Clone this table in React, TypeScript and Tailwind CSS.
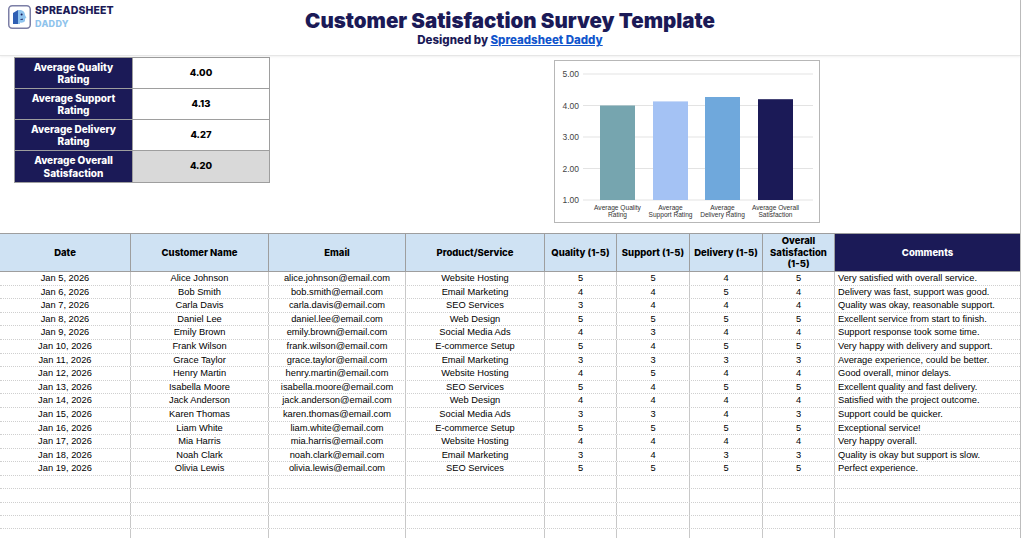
import React from 'react';

const NAVY = '#1b1a57';

const summary = [
  { label: ['Average Quality', 'Rating'], value: '4.00' },
  { label: ['Average Support', 'Rating'], value: '4.13' },
  { label: ['Average Delivery', 'Rating'], value: '4.27' },
  { label: ['Average Overall', 'Satisfaction'], value: '4.20', shaded: true },
];

const rows = [
  ['Jan 5, 2026', 'Alice Johnson', 'alice.johnson@email.com', 'Website Hosting', '5', '5', '4', '5', 'Very satisfied with overall service.'],
  ['Jan 6, 2026', 'Bob Smith', 'bob.smith@email.com', 'Email Marketing', '4', '4', '5', '4', 'Delivery was fast, support was good.'],
  ['Jan 7, 2026', 'Carla Davis', 'carla.davis@email.com', 'SEO Services', '3', '4', '4', '4', 'Quality was okay, reasonable support.'],
  ['Jan 8, 2026', 'Daniel Lee', 'daniel.lee@email.com', 'Web Design', '5', '5', '5', '5', 'Excellent service from start to finish.'],
  ['Jan 9, 2026', 'Emily Brown', 'emily.brown@email.com', 'Social Media Ads', '4', '3', '4', '4', 'Support response took some time.'],
  ['Jan 10, 2026', 'Frank Wilson', 'frank.wilson@email.com', 'E-commerce Setup', '5', '4', '5', '5', 'Very happy with delivery and support.'],
  ['Jan 11, 2026', 'Grace Taylor', 'grace.taylor@email.com', 'Email Marketing', '3', '3', '3', '3', 'Average experience, could be better.'],
  ['Jan 12, 2026', 'Henry Martin', 'henry.martin@email.com', 'Website Hosting', '4', '5', '4', '4', 'Good overall, minor delays.'],
  ['Jan 13, 2026', 'Isabella Moore', 'isabella.moore@email.com', 'SEO Services', '5', '4', '5', '5', 'Excellent quality and fast delivery.'],
  ['Jan 14, 2026', 'Jack Anderson', 'jack.anderson@email.com', 'Web Design', '4', '4', '4', '4', 'Satisfied with the project outcome.'],
  ['Jan 15, 2026', 'Karen Thomas', 'karen.thomas@email.com', 'Social Media Ads', '3', '3', '4', '3', 'Support could be quicker.'],
  ['Jan 16, 2026', 'Liam White', 'liam.white@email.com', 'E-commerce Setup', '5', '5', '5', '5', 'Exceptional service!'],
  ['Jan 17, 2026', 'Mia Harris', 'mia.harris@email.com', 'Website Hosting', '4', '4', '4', '4', 'Very happy overall.'],
  ['Jan 18, 2026', 'Noah Clark', 'noah.clark@email.com', 'Email Marketing', '3', '4', '3', '3', 'Quality is okay but support is slow.'],
  ['Jan 19, 2026', 'Olivia Lewis', 'olivia.lewis@email.com', 'SEO Services', '5', '5', '5', '5', 'Perfect experience.'],
];

// column widths, written out so tailwind picks them up
const colW = [
  'w-[131px]', 'w-[138px]', 'w-[137px]', 'w-[139px]',
  'w-[72px]', 'w-[73px]', 'w-[73px]', 'w-[72px]', 'w-[185px]',
];

const headers = [
  ['Date'], ['Customer Name'], ['Email'], ['Product/Service'],
  ['Quality (1-5)'], ['Support (1-5)'], ['Delivery (1-5)'],
  ['Overall', 'Satisfaction', '(1-5)'],
];

function Logo() {
  return (
    <div className="flex items-center gap-[4px]">
      <svg width="23" height="24" viewBox="0 0 23 24">
        <rect x="0.75" y="0.75" width="21.5" height="22.5" rx="3.5" fill="#fff" stroke="#7c7fa6" strokeWidth="1.5" />
        <path d="M5 8 L10 5 L10 19 L5 19 Z" fill="#2f5fb3" />
        <path d="M10 5 C14 4.5 17 6.5 17 10 L18.5 13 L17 13.5 L17 16 C16 17.5 14 18 12 17.5 L12 19 L10 19 Z" fill="#8fc3ee" />
        <circle cx="13.6" cy="9.5" r="1" fill="#1b1a57" />
        <path d="M12.5 14.5 L15 14.2" stroke="#1b1a57" strokeWidth="0.9" />
      </svg>
      <div className="flex flex-col leading-none font-['Inter',sans-serif] font-extrabold">
        <span className="text-[10.5px] tracking-[0.1px] text-[#1b1a57]">SPREADSHEET</span>
        <span className="mt-[2px] text-[9px] tracking-[0.3px] text-[#8ec3ec]">DADDY</span>
      </div>
    </div>
  );
}

function SummaryTable() {
  return (
    <div className="flex w-[256px] flex-col border border-[#9e9e9e]">
      {summary.map((s, i) => (
        <div key={i} className={`flex h-[31px] ${i < summary.length - 1 ? 'border-b border-[#9e9e9e]' : ''}`}>
          <div className="flex w-[117px] flex-col items-center justify-center bg-[#1b1a57] text-center text-[10px] font-extrabold leading-[12.5px] text-white">
            <span>{s.label[0]}</span>
            <span>{s.label[1]}</span>
          </div>
          <div className={`flex flex-1 items-center justify-center border-l border-[#9e9e9e] text-[9.5px] font-extrabold text-black ${s.shaded ? 'bg-[#d9d9d9]' : 'bg-white'}`}>
            {s.value}
          </div>
        </div>
      ))}
    </div>
  );
}

function Chart() {
  const yLabels = ['5.00', '4.00', '3.00', '2.00', '1.00'];
  const yFor = (v: number) => 139 - (v - 1) * 31.5;
  const bars = [
    { v: 4.0, c: '#76a5af', x: 45, l: ['Average Quality', 'Rating'] },
    { v: 4.13, c: '#a4c2f4', x: 98, l: ['Average', 'Support Rating'] },
    { v: 4.27, c: '#6fa8dc', x: 150, l: ['Average', 'Delivery Rating'] },
    { v: 4.2, c: '#1b1a57', x: 203, l: ['Average Overall', 'Satisfaction'] },
  ];
  return (
    <div className="ml-[284px] mt-[3px] h-[163px] w-[266px] border border-[#b7b7b7] bg-white">
      <svg width="264" height="161" className="font-['Liberation_Sans',Arial,sans-serif]">
        {yLabels.map((t, i) => {
          const y = yFor(5 - i);
          return (
            <g key={t}>
              <line x1="28" x2="258" y1={y} y2={y} stroke="#e3e3e3" strokeWidth="1" />
              <text x="24" y={y + 3} textAnchor="end" fontSize="8.5" fill="#444">{t}</text>
            </g>
          );
        })}
        {bars.map((b, i) => {
          const top = yFor(b.v);
          return (
            <g key={i}>
              <rect x={b.x} y={top} width="35" height={139 - top} fill={b.c} />
              <text x={b.x + 17.5} y="149" textAnchor="middle" fontSize="6.6" fill="#333">{b.l[0]}</text>
              <text x={b.x + 17.5} y="156" textAnchor="middle" fontSize="6.6" fill="#333">{b.l[1]}</text>
            </g>
          );
        })}
      </svg>
    </div>
  );
}

function DataTable() {
  const empty = Array.from({ length: 5 });
  return (
    <div className="flex flex-col">
      {/* header row */}
      <div className="flex h-[39px] border-y border-[#9e9e9e] font-['Inter',sans-serif] text-[9.5px] font-extrabold leading-[11.5px]">
        {headers.map((h, i) => (
          <div key={i} className={`${colW[i]} flex flex-col items-center justify-center border-r border-[#9e9e9e] bg-[#cfe2f3] text-center text-black`}>
            {h.map(line => <span key={line}>{line}</span>)}
          </div>
        ))}
        <div className={`${colW[8]} flex items-center justify-center bg-[#1b1a57] text-white`}>Comments</div>
      </div>
      {rows.map((r, ri) => (
        <div key={ri} className="flex h-[13.6px] border-b border-dotted border-[#cfcfcf] font-['Liberation_Sans',Arial,sans-serif] text-[9.3px] leading-[13px] text-black">
          {r.map((c, ci) => (
            <div
              key={ci}
              className={`${colW[ci]} ${ci === 8 ? 'pl-[3px] text-left' : 'border-r border-[#c8c8c8] text-center'} overflow-hidden whitespace-nowrap`}
            >
              {c}
            </div>
          ))}
        </div>
      ))}
      {empty.map((_, ri) => (
        <div key={ri} className="flex h-[13.4px] border-b border-dotted border-[#cfcfcf]">
          {colW.map((w, ci) => (
            <div key={ci} className={`${w} ${ci === 8 ? '' : 'border-r border-[#c8c8c8]'}`} />
          ))}
        </div>
      ))}
    </div>
  );
}

export default function App() {
  return (
    <div className="h-[538px] w-[1024px] overflow-hidden bg-white font-['Inter',sans-serif]">
      <div className="w-[1021px] border-r border-[#bdbdbd]">
        {/* Header */}
        <div className="relative h-[56px] border-b border-[#e6e6e6] shadow-[0_1px_2px_rgba(0,0,0,0.06)]">
          <div className="absolute left-[8px] top-[5px]">
            <Logo />
          </div>
          <div className="flex flex-col items-center pt-[8px]">
            <h1 className="text-[20.5px] font-black leading-[25px]" style={{ color: NAVY }}>
              Customer Satisfaction Survey Template
            </h1>
            <p className="mt-[0px] text-[11.5px] font-extrabold leading-[14px]" style={{ color: NAVY }}>
              Designed by <span className="text-[#1155cc] underline decoration-[1px] underline-offset-[1px]">Spreadsheet Daddy</span>
            </p>
          </div>
        </div>

        {/* Summary + chart */}
        <div className="flex h-[177px] items-start pl-[14px] pt-[1px]">
          <SummaryTable />
          <Chart />
        </div>

        <DataTable />
      </div>
    </div>
  );
}
